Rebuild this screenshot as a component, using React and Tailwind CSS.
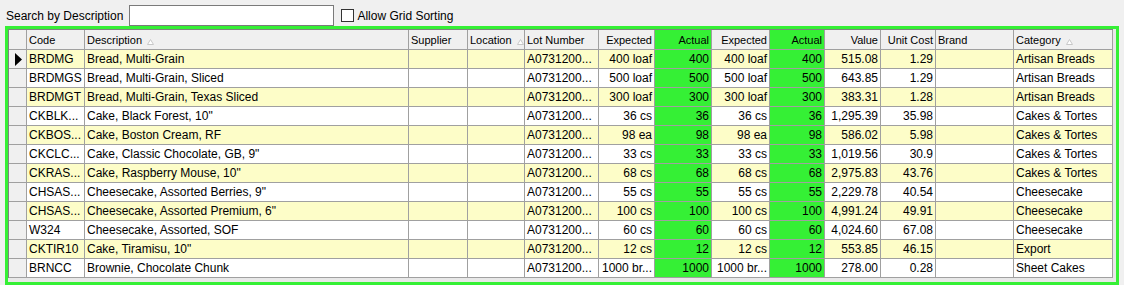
const columns = [
  { key: "code", label: "Code", w: "w-[58px]" },
  { key: "desc", label: "Description", w: "w-[324px]", sort: true },
  { key: "supplier", label: "Supplier", w: "w-[59px]" },
  { key: "location", label: "Location", w: "w-[57px]", sort: true },
  { key: "lot", label: "Lot Number", w: "w-[74px]" },
  { key: "exp1", label: "Expected", w: "w-[56px]", right: true },
  { key: "act1", label: "Actual", w: "w-[57px]", right: true, green: true },
  { key: "exp2", label: "Expected", w: "w-[58px]", right: true },
  { key: "act2", label: "Actual", w: "w-[55px]", right: true, green: true },
  { key: "value", label: "Value", w: "w-[56px]", right: true },
  { key: "unit", label: "Unit Cost", w: "w-[55px]", right: true },
  { key: "brand", label: "Brand", w: "w-[78px]" },
  { key: "cat", label: "Category", w: "w-[99px]", sort: true },
];

const rows = [
  ["BRDMG", "Bread, Multi-Grain", "400 loaf", "400", "515.08", "1.29", "Artisan Breads"],
  ["BRDMGS", "Bread, Multi-Grain, Sliced", "500 loaf", "500", "643.85", "1.29", "Artisan Breads"],
  ["BRDMGT", "Bread, Multi-Grain, Texas Sliced", "300 loaf", "300", "383.31", "1.28", "Artisan Breads"],
  ["CKBLK...", "Cake, Black Forest, 10\"", "36 cs", "36", "1,295.39", "35.98", "Cakes & Tortes"],
  ["CKBOS...", "Cake, Boston Cream, RF", "98 ea", "98", "586.02", "5.98", "Cakes & Tortes"],
  ["CKCLC...", "Cake, Classic Chocolate, GB, 9\"", "33 cs", "33", "1,019.56", "30.9", "Cakes & Tortes"],
  ["CKRAS...", "Cake, Raspberry Mouse, 10\"", "68 cs", "68", "2,975.83", "43.76", "Cakes & Tortes"],
  ["CHSAS...", "Cheesecake, Assorted Berries, 9\"", "55 cs", "55", "2,229.78", "40.54", "Cheesecake"],
  ["CHSAS...", "Cheesecake, Assorted Premium, 6\"", "100 cs", "100", "4,991.24", "49.91", "Cheesecake"],
  ["W324", "Cheesecake, Assorted, SOF", "60 cs", "60", "4,024.60", "67.08", "Cheesecake"],
  ["CKTIR10", "Cake, Tiramisu, 10\"", "12 cs", "12", "553.85", "46.15", "Export"],
  ["BRNCC", "Brownie, Chocolate Chunk", "1000 br...", "1000", "278.00", "0.28", "Sheet Cakes"],
].map(([code, desc, exp, act, value, unit, cat]) => ({
  code,
  desc,
  supplier: "",
  location: "",
  lot: "A0731200...",
  exp1: exp,
  act1: act,
  exp2: exp,
  act2: act,
  value,
  unit,
  brand: "",
  cat,
}));

function SortGlyph() {
  return (
    <svg width="7" height="6" viewBox="0 0 7 6" className="ml-[5px] mt-[4px] shrink-0">
      <polygon points="3.5,0.5 6.5,5.5 0.5,5.5" fill="#ffffff" stroke="#c8c8c8" strokeWidth="1" />
    </svg>
  );
}

function HeaderRow() {
  return (
    <div className="flex h-[20px] text-[11px]">
      <div className="w-[18px] shrink-0 border-r border-b border-[#a0a0a0] bg-[#f0f0f0]" />
      {columns.map((c) => (
        <div
          key={c.key}
          className={`${c.w} shrink-0 flex items-center px-[2px] border-r border-b border-[#a0a0a0] whitespace-nowrap overflow-hidden ${
            c.green ? "bg-[#35f035]" : "bg-[#f0f0f0]"
          } ${c.right ? "justify-end" : "justify-start"}`}
        >
          <span>{c.label}</span>
          {c.sort && <SortGlyph />}
        </div>
      ))}
    </div>
  );
}

function DataRow({ row, index }) {
  const stripe = index % 2 === 0 ? "bg-[#fdfdc8]" : "bg-white";
  return (
    <div className="flex h-[19px]">
      <div className="w-[18px] shrink-0 flex items-center justify-center border-r border-b border-[#a0a0a0] bg-[#f0f0f0]">
        {index === 0 && (
          <svg width="7" height="13" viewBox="0 0 7 13" className="ml-[1px]">
            <polygon points="0,0 7,6.5 0,13" fill="#000000" />
          </svg>
        )}
      </div>
      {columns.map((c) => (
        <div
          key={c.key}
          className={`${c.w} shrink-0 flex items-center px-[2px] border-r border-b border-[#a0a0a0] whitespace-nowrap overflow-hidden ${
            c.green ? "bg-[#35f035]" : stripe
          } ${c.right ? "justify-end" : "justify-start"}`}
        >
          {row[c.key]}
        </div>
      ))}
    </div>
  );
}

export default function App() {
  return (
    <div className="w-[1124px] h-[285px] overflow-hidden bg-[#f0f0f0] text-[12px] leading-[14px] text-black font-['Liberation_Sans',Arial,sans-serif]">
      {/* search bar */}
      <div className="flex items-center h-[21px] mt-[5px] pl-[6px]">
        <span>Search by Description</span>
        <div className="ml-[6px] w-[205px] h-[21px] border border-[#7a7a7a] bg-white" />
        <div className="ml-[7px] w-[13px] h-[13px] border border-[#333333] bg-white" />
        <span className="ml-[3px]">Allow Grid Sorting</span>
      </div>

      {/* grid frame */}
      <div className="ml-[5px] w-[1114px] h-[259px] border-[3px] border-[#35f035] bg-[#e8e8e8]">
        <div className="w-[1105px] border-l border-t border-[#808080]">
          <HeaderRow />
          {rows.map((r, i) => (
            <DataRow key={i} row={r} index={i} />
          ))}
        </div>
      </div>
    </div>
  );
}
